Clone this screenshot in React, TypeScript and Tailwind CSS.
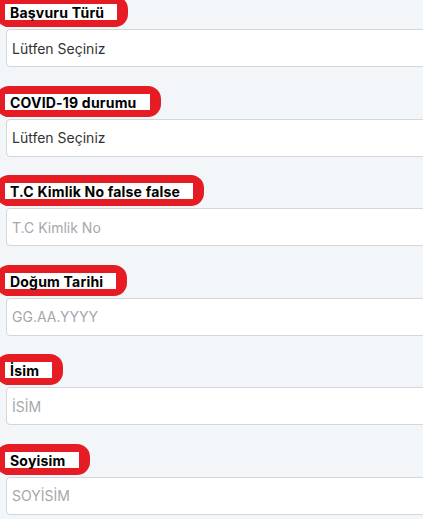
import React from 'react';

const fields = [
  { label: 'Başvuru Türü', value: 'Lütfen Seçiniz', isSelect: true },
  { label: 'COVID-19 durumu', value: 'Lütfen Seçiniz', isSelect: true },
  { label: 'T.C Kimlik No false false', value: 'T.C Kimlik No' },
  { label: 'Doğum Tarihi', value: 'GG.AA.YYYY' },
  { label: 'İsim', value: 'İSİM' },
  { label: 'Soyisim', value: 'SOYİSİM' },
];

export default function App() {
  return (
    <div className="w-[423px] h-[519px] overflow-hidden bg-[#f3f6f9] font-['Inter',sans-serif]">
      <div className="mt-[-4px] pl-[6px] flex flex-col">
        {fields.map((f) => (
          <div key={f.label} className="h-[89.5px] flex flex-col">
            <div className="ml-[-10px] self-start border-[#e61c24] border-t-[8px] border-b-[7px] border-l-[9px] border-r-[11px] rounded-[13px]">
              <span className="block bg-white pl-[5px] pr-[13px] h-[16px] leading-[17px] text-[14px] font-bold text-black tracking-[0.2px]">
                {f.label}
              </span>
            </div>
            <div className="mt-[2px] w-[440px] h-[38px] bg-white border border-[#d3d6da] rounded-[4px] flex items-center pl-[5px]">
              <span className={f.isSelect ? 'text-[14px] text-[#333]' : 'text-[14px] text-[#a4a8ad]'}>
                {f.value}
              </span>
            </div>
          </div>
        ))}
      </div>
    </div>
  );
}
